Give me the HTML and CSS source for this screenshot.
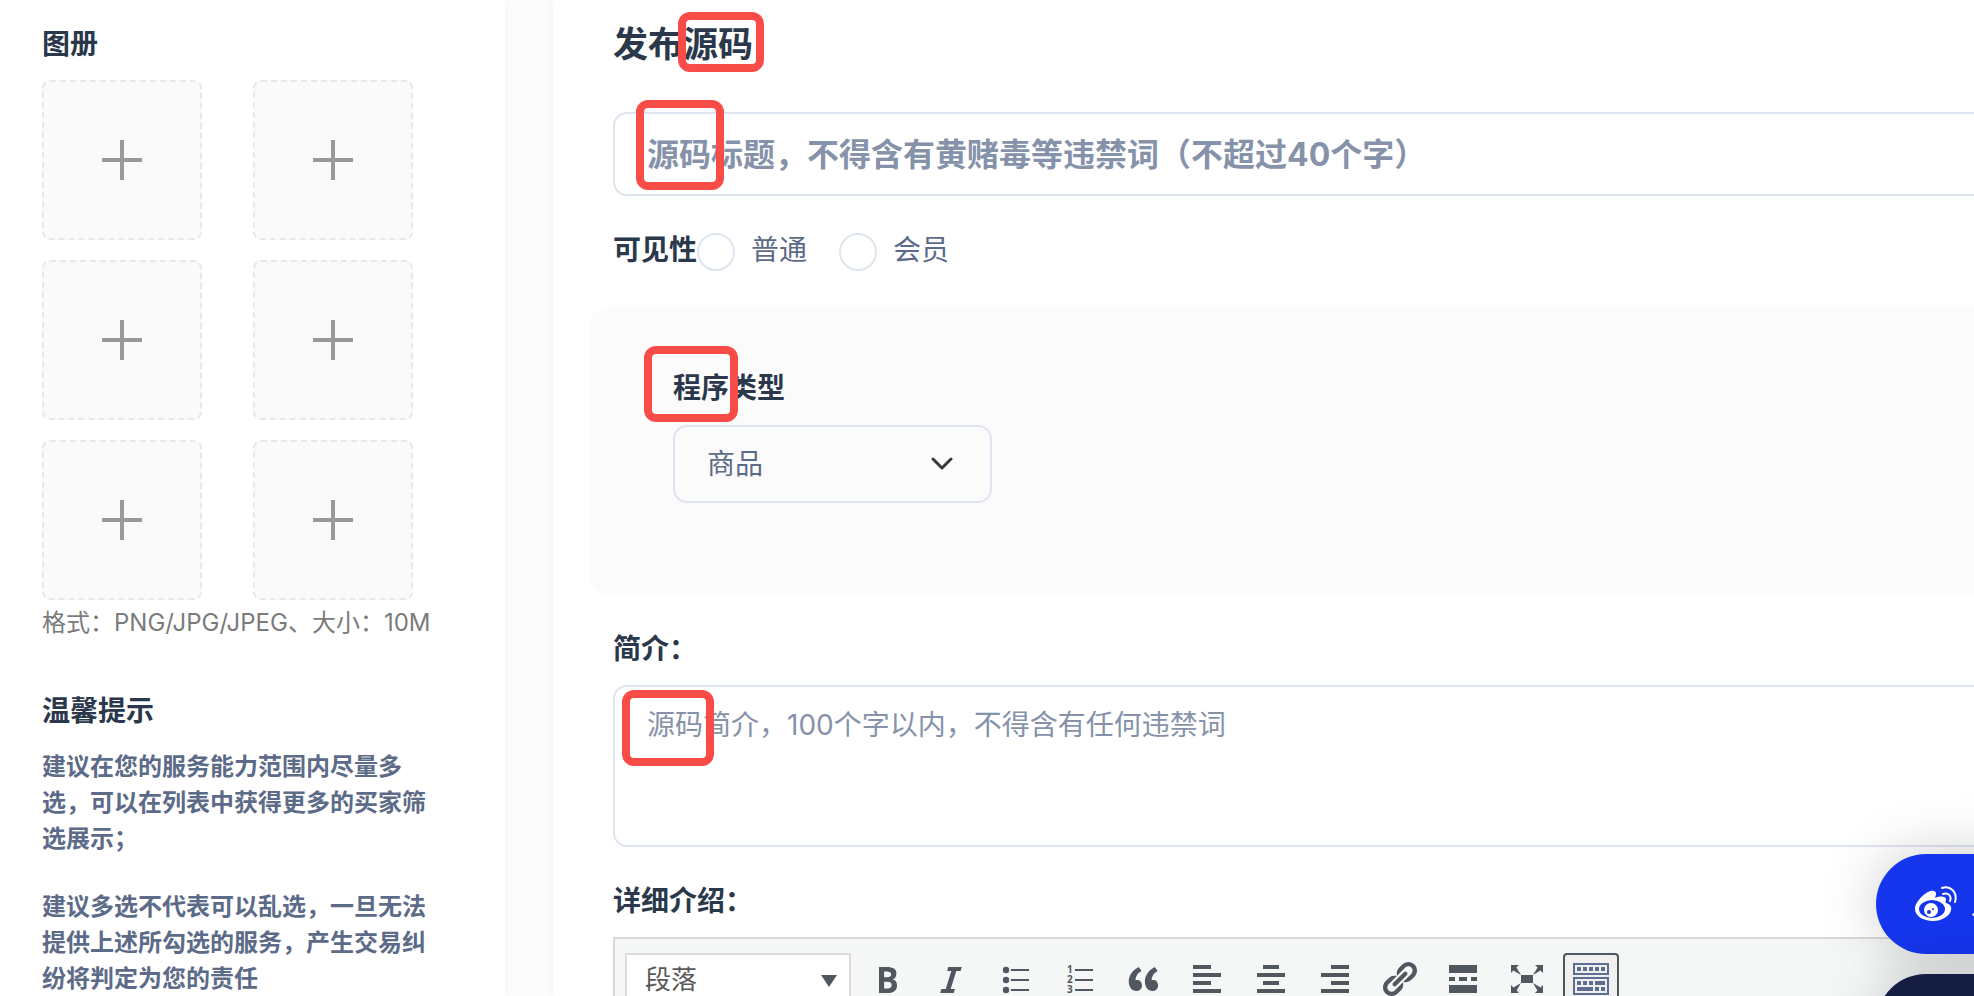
FILE: index.html
```
<!DOCTYPE html>
<html lang="zh-CN">
<head>
<meta charset="utf-8">
<title>发布源码</title>
<link rel="stylesheet" href="styles.css">
</head>
<body>
<div class="layout">
  <aside class="sidebar">
    <h2 class="label">图册</h2>
    <div class="gallery">
      <button class="tile" type="button" aria-label="添加图片"></button>
      <button class="tile" type="button" aria-label="添加图片"></button>
      <button class="tile" type="button" aria-label="添加图片"></button>
      <button class="tile" type="button" aria-label="添加图片"></button>
      <button class="tile" type="button" aria-label="添加图片"></button>
      <button class="tile" type="button" aria-label="添加图片"></button>
    </div>
    <p class="format">格式：PNG/JPG/JPEG、大小：10M</p>
    <h2 class="label tips-title">温馨提示</h2>
    <p class="tip">建议在您的服务能力范围内尽量多选，可以在列表中获得更多的买家筛选展示；</p>
    <p class="tip">建议多选不代表可以乱选，一旦无法提供上述所勾选的服务，产生交易纠纷将判定为您的责任</p>
  </aside>

  <main class="main">
    <div class="marked">
      <h1 class="title">发布源码</h1>
      <span class="mark mark-heading"></span>
    </div>
    <div class="marked title-field">
      <input class="title-input" type="text" aria-label="标题" placeholder="源码标题，不得含有黄赌毒等违禁词（不超过40个字）">
      <span class="mark mark-title"></span>
    </div>
    <div class="visibility" role="radiogroup" aria-labelledby="visibility-label">
      <span class="label" id="visibility-label">可见性</span>
      <label class="option"><input class="radio" type="radio" name="visibility">普通</label>
      <label class="option"><input class="radio" type="radio" name="visibility">会员</label>
    </div>
    <section class="panel marked">
      <label class="label" for="type">程序类型</label>
      <div class="select-wrap">
        <select class="select" id="type"><option>商品</option></select>
        <svg class="chevron" viewBox="0 0 24 14"><path d="M3 2l9 9 9-9"/></svg>
      </div>
      <span class="mark mark-type"></span>
    </section>
    <label class="label" for="intro">简介：</label>
    <div class="marked intro-field">
      <textarea class="intro" id="intro" placeholder="源码简介，100个字以内，不得含有任何违禁词"></textarea>
      <span class="mark mark-intro"></span>
    </div>
    <h2 class="label">详细介绍：</h2>
    <div class="editor">
      <div class="toolbar">
        <button class="block-format" type="button">段落<svg class="caret" viewBox="0 0 16 12"><path d="M0 0h16l-8 12z"/></svg></button>
        <button class="tool" type="button" aria-label="粗体"><svg viewBox="0 0 20 20"><path d="M6 4v13h4.54c1.37 0 2.46-.33 3.26-1 .8-.66 1.2-1.58 1.2-2.77 0-.84-.17-1.51-.51-2.01s-.9-.85-1.67-1.03v-.09c.57-.1 1.02-.4 1.36-.9s.51-1.13.51-1.91c0-1.14-.39-1.98-1.17-2.5C12.75 4.26 11.5 4 9.78 4H6zm2.57 5.15V6.26h1.36c.73 0 1.27.11 1.61.32.34.22.51.58.51 1.07 0 .54-.16.92-.47 1.15s-.82.35-1.51.35h-1.5zm0 2.19h1.6c1.44 0 2.16.53 2.16 1.61 0 .6-.17 1.05-.51 1.34s-.86.43-1.57.43H8.57v-3.38z"/></svg></button>
        <button class="tool" type="button" aria-label="斜体"><svg viewBox="0 0 20 20"><path d="M14.78 6h-2.13l-2.8 9h2.12l-.62 2H4.6l.62-2h2.14l2.8-9H8.03l.62-2h6.75z"/></svg></button>
        <button class="tool" type="button" aria-label="项目符号列表"><svg viewBox="0 0 20 20"><circle cx="5.5" cy="5.5" r="1.6"/><circle cx="5.5" cy="10.5" r="1.6"/><circle cx="5.5" cy="15.5" r="1.6"/><path d="M8 5h9v1H8zM8 10h9v1H8zM8 15h9v1H8z"/></svg></button>
        <button class="tool" type="button" aria-label="编号列表"><svg viewBox="0 0 20 20"><text class="digit" x="4" y="7">1</text><text class="digit" x="4" y="12">2</text><text class="digit" x="4" y="17">3</text><path d="M8 5h9v1H8zM8 10h9v1H8zM8 15h9v1H8z"/></svg></button>
        <button class="tool" type="button" aria-label="段落引用"><svg viewBox="0 0 20 20"><path d="M9.49 13.22c0-.74-.2-1.38-.61-1.9-.62-.78-1.83-.88-2.53-.72-.29-1.65 1.11-3.75 2.92-4.65L7.88 4c-2.73 1.3-5.42 4.28-4.96 8.05C3.21 14.43 4.59 16 6.54 16c.85 0 1.56-.25 2.12-.75s.83-1.18.83-2.03zm8.05 0c0-.74-.2-1.38-.61-1.9-.63-.78-1.83-.88-2.53-.72-.29-1.65 1.11-3.75 2.92-4.65L15.93 4c-2.73 1.3-5.41 4.28-4.95 8.05.29 2.38 1.66 3.95 3.61 3.95.85 0 1.56-.25 2.12-.75s.83-1.18.83-2.03z"/></svg></button>
        <button class="tool" type="button" aria-label="左对齐"><svg viewBox="0 0 20 20"><path d="M12 5V3H3v2h9zm5 4V7H3v2h14zm-5 4v-2H3v2h9zm5 4v-2H3v2h14z"/></svg></button>
        <button class="tool" type="button" aria-label="居中对齐"><svg viewBox="0 0 20 20"><path d="M14 5V3H6v2h8zm3 4V7H3v2h14zm-3 4v-2H6v2h8zm3 4v-2H3v2h14z"/></svg></button>
        <button class="tool" type="button" aria-label="右对齐"><svg viewBox="0 0 20 20"><path d="M17 5V3H8v2h9zm0 4V7H3v2h14zm0 4v-2H8v2h9zm0 4v-2H3v2h14z"/></svg></button>
        <button class="tool" type="button" aria-label="插入链接"><svg viewBox="0 0 20 20"><path d="M17.74 2.76c1.68 1.69 1.68 4.41 0 6.1l-1.53 1.52c-1.12 1.12-2.7 1.47-4.14 1.09l2.62-2.61.76-.77.76-.76c.84-.84.84-2.2 0-3.04-.84-.85-2.2-.85-3.04 0l-.77.76-3.38 3.38c-.37-1.44-.02-3.02 1.1-4.14l1.52-1.53c1.69-1.68 4.42-1.68 6.1 0zM8.59 13.43l5.34-5.34c.42-.42.42-1.1 0-1.52-.44-.43-1.13-.39-1.53 0l-5.33 5.34c-.42.42-.42 1.1 0 1.52.44.43 1.13.39 1.52 0zm-.76 2.29l4.14-4.15c.38 1.44.03 3.02-1.09 4.14l-1.52 1.53c-1.69 1.68-4.41 1.68-6.1 0-1.68-1.68-1.68-4.42 0-6.1l1.53-1.52c1.12-1.12 2.7-1.47 4.14-1.1l-4.14 4.15c-.85.84-.85 2.2 0 3.05.84.84 2.2.84 3.04 0z"/></svg></button>
        <button class="tool" type="button" aria-label="插入更多标签"><svg viewBox="0 0 20 20"><path d="M17 7V3H3v4h14zM6 11V9H3v2h3zm6 0V9H8v2h4zm5 0V9h-3v2h3zm0 6v-4H3v4h14z"/></svg></button>
        <button class="tool" type="button" aria-label="全屏"><svg viewBox="0 0 20 20"><path d="M7 8h6v4H7zM2 13v4h4l-1.2-1.2L7 12l-3.8 2.2zM14 17h4v-4l-1.2 1.2L13 12l2.2 3.8zM14 3l1.3 1.3L13 8l3.8-2.2L18 7V3zM6 3H2v4l1.2-1.2L7 8 4.7 4.3z"/></svg></button>
        <button class="tool tool-active" type="button" aria-label="工具栏切换"><svg viewBox="0 0 20 20"><path d="M19 2v6H1V2h18zm-1 5V3H2v4h16zM5 4v2H3V4h2zm3 0v2H6V4h2zm3 0v2H9V4h2zm3 0v2h-2V4h2zm3 0v2h-2V4h2zm2 5v9H1V9h18zm-1 8v-7H2v7h16zM5 11v2H3v-2h2zm3 0v2H6v-2h2zm3 0v2H9v-2h2zm6 0v2h-5v-2h5zm-6 3v2H3v-2h8zm3 0v2h-2v-2h2zm3 0v2h-2v-2h2z"/></svg></button>
      </div>
    </div>
  </main>
</div>

<div class="floating">
  <button class="pill" type="button">
    <svg class="weibo" viewBox="0 0 42 36">
      <path class="solid" d="M19 5c3 1 2 4 1 7 5-2 10-2 11 1 0 2-1 3 0 4 4 1 6 4 5 7-1 6-9 11-18 11C8 35 0 30 0 23 0 15 13 3 19 5z"/>
      <ellipse class="blue" cx="17" cy="23" rx="13" ry="9"/>
      <circle class="solid" cx="16" cy="24" r="7"/>
      <circle class="blue" cx="14" cy="26" r="2"/>
      <circle class="blue" cx="18" cy="23" r="1"/>
      <path class="wave" d="M27 2c8-3 16 4 13 14M28 8c5-2 9 2 7 7"/>
    </svg>
    <span>发布源码</span>
  </button>
  <button class="pill pill-dark" type="button" aria-label="更多"></button>
</div>
</body>
</html>
```
FILE: styles.css
```
* { box-sizing: border-box; }

html { overflow: hidden; }

body {
  margin: 0;
  min-height: 100vh;
  background: #fcfcfc;
  color: #2b384b;
  font-family: Inter, "Noto Sans CJK SC", sans-serif;
  font-size: 28px;
  line-height: 40px;
}

button, input, select, textarea { font-family: inherit; color: inherit; margin: 0; }

h1, h2, p { margin: 0; }

.layout {
  display: flex;
  gap: 48px;
  width: calc(100% + 160px);
  height: 100vh;
}

.sidebar, .main {
  background: #fff;
  box-shadow: 0 0 12px rgba(0, 0, 0, .04);
}

.sidebar {
  flex: none;
  width: 505px;
  padding: 24px 76px 0 42px;
}

.label {
  display: block;
  font-size: 28px;
  line-height: 40px;
  font-weight: 700;
}

.gallery {
  display: grid;
  grid-template-columns: 160px 160px;
  gap: 20px 51px;
  margin-top: 16px;
}

.tile {
  height: 160px;
  padding: 0;
  border: 2px dashed #e8e8e8;
  border-radius: 8px;
  background:
    linear-gradient(#999, #999) center / 40px 4px no-repeat,
    linear-gradient(#999, #999) center / 4px 40px no-repeat,
    #fafafa;
}

.format {
  color: #7b7b7b;
  font-size: 24px;
  line-height: 36px;
  margin-top: 5px;
  white-space: nowrap;
}

.tips-title { margin-top: 50px; }

.tip {
  color: #5c6b88;
  font-size: 24px;
  line-height: 36px;
  font-weight: 700;
  margin-top: 18px;
}

.tip + .tip { margin-top: 32px; }

.main {
  flex: 1;
  min-width: 0;
  padding: 20px 60px 0;
}

.title {
  font-size: 35px;
  line-height: 48px;
  font-weight: 700;
}

.marked { position: relative; }

.mark {
  position: absolute;
  border: 8px solid #f74c48;
  border-radius: 12px;
  pointer-events: none;
}

.mark-heading { left: 65px; top: -8px; width: 86px; height: 60px; }
.mark-title { left: 23px; top: -12px; width: 88px; height: 90px; }
.mark-type { left: 55px; top: 39px; width: 94px; height: 76px; }
.mark-intro { left: 9px; top: 5px; width: 92px; height: 76px; }

.title-field { margin-top: 44px; }

.title-input, .intro, .select {
  display: block;
  width: 100%;
  border: 2px solid #dfe5f0;
  border-radius: 14px;
  background: transparent;
}

.title-input {
  height: 84px;
  padding: 0 32px;
  font-size: 32px;
  font-weight: 700;
}

.title-input::placeholder, .intro::placeholder { color: #8592a9; opacity: 1; }

.visibility {
  display: flex;
  align-items: center;
  margin-top: 33px;
  color: #5c6b88;
}

.visibility .label { color: #2b384b; }

.option {
  display: flex;
  align-items: center;
  gap: 16px;
  margin-right: 32px;
}

.radio {
  appearance: none;
  width: 38px;
  height: 38px;
  margin-top: 4px;
  border: 2px solid #dfe5f0;
  border-radius: 50%;
}

.panel {
  margin: 36px -24px 0;
  height: 288px;
  padding: 61px 84px;
  border-radius: 20px;
  background: #fbfbfb;
}

.select-wrap {
  position: relative;
  width: 319px;
  margin-top: 17px;
}

.select {
  appearance: none;
  height: 78px;
  padding: 0 32px;
  color: #5c6b88;
  font-size: 28px;
}

.chevron {
  position: absolute;
  right: 38px;
  top: 32px;
  width: 24px;
  height: 14px;
  fill: none;
  stroke: #343a40;
  stroke-width: 3;
  stroke-linecap: round;
  stroke-linejoin: round;
  pointer-events: none;
}

.panel + .label { margin-top: 34px; }

.intro-field { margin: 16px 0 34px; }

.intro {
  height: 162px;
  padding: 18px 32px;
  font-size: 28px;
  line-height: 40px;
  resize: none;
}

.editor {
  margin-top: 16px;
  border: 2px solid #d8d9d9;
  background: #f5f7f7;
}

.toolbar {
  display: flex;
  gap: 8px;
  padding: 14px 10px;
}

.block-format {
  display: flex;
  flex: none;
  align-items: center;
  justify-content: space-between;
  width: 226px;
  height: 56px;
  padding: 0 12px 8px 18px;
  border: 2px solid #dcdcdc;
  background: #fff;
  color: #595959;
  font-size: 26px;
}

.caret {
  width: 16px;
  height: 12px;
  margin-top: 8px;
  fill: #50575e;
}

.tool {
  flex: none;
  width: 56px;
  height: 56px;
  padding: 0 6px 4px;
  border: 2px solid transparent;
  border-radius: 4px;
  background: none;
  fill: #50575e;
}

.tool svg { display: block; width: 40px; height: 40px; }

.tool-active { border-color: #50575e; background: #f0f0f1; fill: #5c6f92; }

.digit { font: 700 5px "Open Sans", sans-serif; }

.floating {
  position: fixed;
  left: calc(100% - 98px);
  top: 854px;
  display: grid;
  gap: 20px;
}

.pill {
  display: flex;
  align-items: center;
  gap: 14px;
  width: 260px;
  height: 100px;
  padding: 0 39px;
  border: 0;
  border-radius: 50px;
  background: #1636ee;
  box-shadow: 0 0 60px rgba(0, 0, 0, .2);
  color: #fff;
  font-size: 28px;
  white-space: nowrap;
}

.pill-dark { background: #151d42; }

.weibo { flex: none; width: 42px; height: 36px; }
.solid { fill: #fff; }
.blue { fill: #1636ee; }
.wave { fill: none; stroke: #fff; stroke-width: 2; stroke-linecap: round; }
```
